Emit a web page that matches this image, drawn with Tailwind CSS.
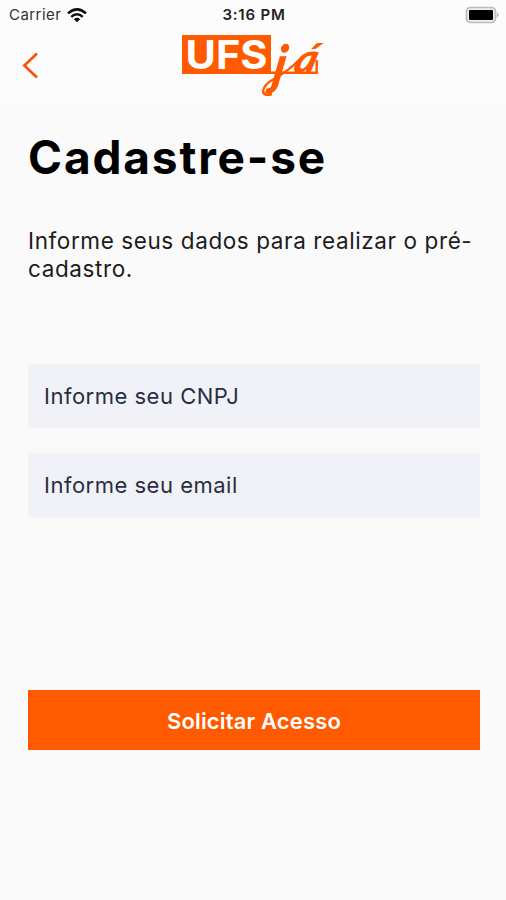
<!DOCTYPE html>
<html lang="pt-BR">
<head>
<meta charset="utf-8">
<title>Cadastre-se</title>
<script src="https://cdn.jsdelivr.net/npm/@tailwindcss/browser@4"></script>
</head>
<body class="bg-[#fafafa] font-['Inter',sans-serif] text-black">
<div class="flex h-[900px] w-[506px] flex-col overflow-hidden">
  <div class="bg-[#fcfcfc]">
    <div class="grid h-7 grid-cols-3 items-center pr-[7px] pl-[9px] text-[15px] leading-[30px]">
      <div class="flex items-center gap-[6px] text-[#333]">
        <span class="tracking-[0.45px]">Carrier</span>
        <svg class="h-[15px] w-5" viewBox="0 0 20 15" fill="none" stroke="#111" stroke-width="2.5"><path d="M1 5.4Q10-2.6 19 5.4M4.2 8.9Q10 3.7 15.8 8.9"/><path d="M6.8 11.2Q10 8.3 13.2 11.2L10 14.3Z" fill="#111" stroke="none"/></svg>
      </div>
      <div class="text-center font-semibold tracking-[0.8px] whitespace-nowrap text-[#222]">3:16 PM</div>
      <svg class="-mt-px h-[18px] w-[34px] justify-self-end" viewBox="0 0 34 18"><rect x="1.5" y="1.5" width="29" height="15" rx="4" fill="#eee" stroke="#bbb" stroke-width="1.7"/><rect x="4" y="4" width="24" height="10" rx="1" fill="#000"/><path d="M32 6.5Q35 9 32 11.5Z" fill="#aaa"/></svg>
    </div>
    <header class="grid h-[76px] grid-cols-[1fr_150px_1fr] items-start">
      <button class="mt-6 ml-[22px] h-[28px] w-[18px]" aria-label="Voltar"><svg class="h-[28px] w-[18px]" viewBox="0 0 18 28" fill="none" stroke="#ff4b08" stroke-width="2.6"><path d="M15 1.5L2.3 13.5L15 25.5"/></svg></button>
      <svg class="mt-1 h-[68px] w-[150px] overflow-visible" viewBox="0 0 150 68" fill="#ff5a00">
        <path d="M4 3H93V42H4Z"/>
        <path d="M93 40.7H138.7V28" fill="none" stroke="#ff5a00" stroke-width="2.4"/>
        <text x="7.5" y="37" font-family="Inter, sans-serif" font-weight="700" font-size="39" textLength="82" lengthAdjust="spacingAndGlyphs" fill="#fff">UFS</text>
        <g font-family="Lato, sans-serif" font-style="italic" font-weight="900">
          <text transform="translate(93 52) skewX(-10) scale(.9 1)" font-size="54">j</text>
          <text transform="translate(114 41) skewX(-16) scale(1.08 1.05)" font-size="39">á</text>
        </g>
        <path d="M94 62C81 66 83 54 96 47Q110 39 120 29" fill="none" stroke="#ff5a00" stroke-width="2.4"/>
      </svg>
    </header>
  </div>
  <main class="flex flex-col px-7">
    <h1 class="mt-[27px] text-[46px] leading-[53px] font-bold tracking-[1.85px] whitespace-nowrap">Cadastre-se</h1>
    <p class="mt-[43px] text-[22.5px] leading-7 tracking-[0.6px] whitespace-nowrap text-[#1c1c1c]">Informe seus dados para realizar o pré-<br>cadastro.</p>
    <div class="mt-[81px] flex h-16 w-[452px] items-center bg-[#f0f2f7] px-4 text-[22px] tracking-[0.5px] text-[#292d42]">Informe seu CNPJ</div>
    <div class="mt-[25px] flex h-16 w-[452px] items-center bg-[#f0f2f7] px-4 text-[22px] tracking-[0.5px] text-[#292d42]">Informe seu email</div>
    <button class="mt-[173px] h-[60px] w-[452px] bg-[#ff5a00] pt-0.5 text-[22px] font-semibold tracking-[0.15px] text-white">Solicitar Acesso</button>
  </main>
</div>
</body>
</html>
